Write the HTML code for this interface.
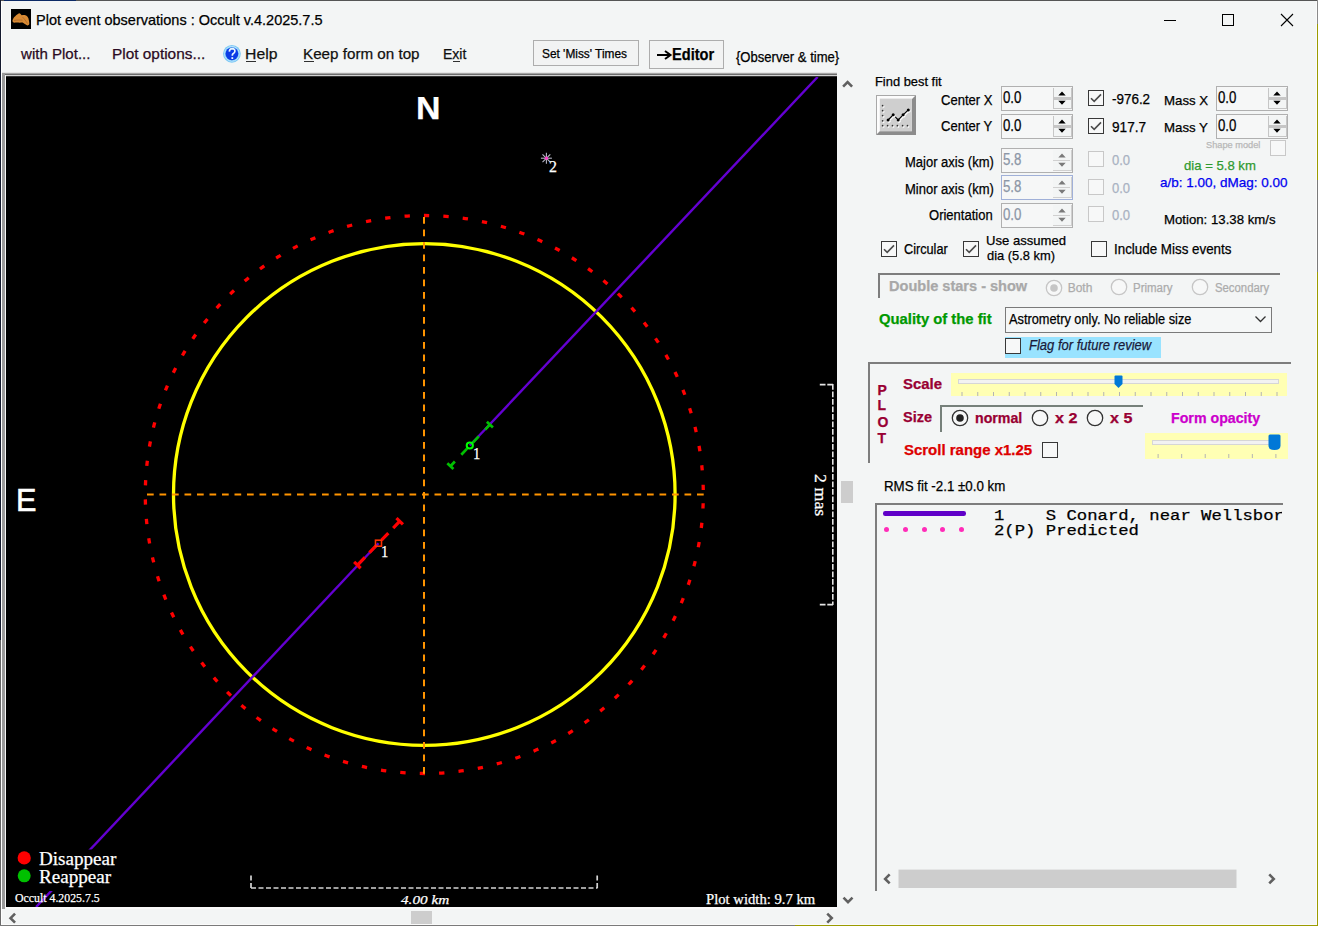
<!DOCTYPE html>
<html><head><meta charset="utf-8"><style>
html,body{margin:0;padding:0;}
body{width:1318px;height:926px;position:relative;overflow:hidden;background:#f3f5f5;font-family:"Liberation Sans", sans-serif;}
.t{position:absolute;white-space:nowrap;-webkit-text-stroke:0.25px currentColor;}
</style></head><body>
<div style="position:absolute;left:0px;top:0px;width:1318px;height:1px;background:#555555"></div>
<div style="position:absolute;left:4px;top:0px;width:72px;height:1px;background:#0c2a66"></div>
<div style="position:absolute;left:0px;top:0px;width:1px;height:926px;background:#141a2e"></div>
<div style="position:absolute;left:0px;top:640px;width:1px;height:286px;background:#6a6a6a"></div>
<div style="position:absolute;left:1px;top:1px;width:1px;height:924px;background:#ffffff"></div>
<div style="position:absolute;left:1317px;top:0px;width:1px;height:24px;background:#8a8a8a"></div>
<div style="position:absolute;left:1317px;top:24px;width:1px;height:156px;background:#9b9b00"></div>
<div style="position:absolute;left:1317px;top:180px;width:1px;height:92px;background:#7a7a7a"></div>
<div style="position:absolute;left:1317px;top:272px;width:1px;height:654px;background:#9b9b00"></div>
<div style="position:absolute;left:1316px;top:1px;width:1px;height:924px;background:#fbfbfb"></div>
<div style="position:absolute;left:0px;top:925px;width:795px;height:1px;background:#7a7a7a"></div>
<div style="position:absolute;left:795px;top:925px;width:523px;height:1px;background:#9b9b00"></div>
<div style="position:absolute;left:1px;top:924px;width:1316px;height:1px;background:#fbfbfb"></div>
<svg style="position:absolute;left:11px;top:9px" width="20" height="20" viewBox="0 0 20 20">
<rect width="20" height="20" fill="#000"/>
<path d="M1.5 11.6 C2 9.5 3 8 4 7.4 C5.5 6 7 4.8 8.2 4.3 C9.3 4.6 10 5.5 10.8 6.3 C12 6 13.3 5.8 14.4 6.3 C16 7 17 8 17.5 9.6 C17.8 11.5 18.5 13.5 18.3 15 C17.8 16.2 17 16.6 16.4 16.4 C14.5 15.6 13 14.5 11.6 13.6 C9.5 13.8 7.5 13.8 6.3 13.6 C4.5 13.6 3 13.8 2.6 13.6 C1.8 13.2 1.4 12.4 1.5 11.6 Z" fill="#d88a34"/>
<path d="M3 11.5 C6 10.8 9 11 11.5 11.2 M11.5 8 C13 9.5 14.5 11.5 16.5 14.5" stroke="#b06a2a" stroke-width="0.9" fill="none"/>
</svg>
<div class="t" style="left:35.53px;top:11.95px;font-family:'Liberation Sans', sans-serif;font-size:15px;line-height:15px;font-weight:normal;font-style:normal;color:#000;transform:scaleX(0.9661);transform-origin:0 0;">Plot event observations : Occult v.4.2025.7.5</div>
<div style="position:absolute;left:1164px;top:20px;width:12px;height:1px;background:#000"></div>
<div style="position:absolute;left:1222px;top:14px;width:12px;height:12px;border:1px solid #000;box-sizing:border-box"></div>
<svg style="position:absolute;left:1280px;top:13px" width="14" height="14" viewBox="0 0 14 14">
<path d="M1 1 L13 13 M13 1 L1 13" stroke="#000" stroke-width="1.1"/></svg>
<div class="t" style="left:21.00px;top:46.05px;font-family:'Liberation Sans', sans-serif;font-size:15px;line-height:15px;font-weight:normal;font-style:normal;color:#2a0a22;transform:scaleX(1.0040);transform-origin:0 0;">with Plot...</div>
<div class="t" style="left:112.47px;top:46.05px;font-family:'Liberation Sans', sans-serif;font-size:15px;line-height:15px;font-weight:normal;font-style:normal;color:#2a0a22;transform:scaleX(1.0257);transform-origin:0 0;">Plot options...</div>
<svg style="position:absolute;left:222px;top:44px" width="20" height="20" viewBox="0 0 20 20">
<circle cx="9.9" cy="9.8" r="8.9" fill="#7cc8f4"/>
<circle cx="9.9" cy="9.8" r="7.4" fill="none" stroke="#b8e4ff" stroke-width="1"/>
<circle cx="9.9" cy="9.8" r="6.4" fill="#0a3ce6"/>
<path d="M7.3 7.6 Q7.5 4.6 10.2 4.6 Q13 4.7 12.9 7.2 Q12.8 8.8 11 9.8 Q10.3 10.3 10.3 11.8" fill="none" stroke="#e8f6ff" stroke-width="1.7"/>
<rect x="9.4" y="13.2" width="1.8" height="1.8" fill="#e8f6ff"/></svg>
<div class="t" style="left:244.55px;top:46.05px;font-family:'Liberation Sans', sans-serif;font-size:15px;line-height:15px;font-weight:normal;font-style:normal;color:#101010;transform:scaleX(1.0506);transform-origin:0 0;">Help</div>
<div style="position:absolute;left:246px;top:61px;width:10px;height:1px;background:#303030"></div>
<div class="t" style="left:302.79px;top:46.05px;font-family:'Liberation Sans', sans-serif;font-size:15px;line-height:15px;font-weight:normal;font-style:normal;color:#101010;transform:scaleX(1.0129);transform-origin:0 0;">Keep form on top</div>
<div style="position:absolute;left:304px;top:61px;width:10px;height:1px;background:#303030"></div>
<div class="t" style="left:442.87px;top:46.05px;font-family:'Liberation Sans', sans-serif;font-size:15px;line-height:15px;font-weight:normal;font-style:normal;color:#101010;transform:scaleX(0.9341);transform-origin:0 0;">Exit</div>
<div style="position:absolute;left:453px;top:61px;width:7px;height:1px;background:#303030"></div>
<div style="position:absolute;left:533px;top:40px;width:106px;height:26px;border:1px solid #adadad;box-sizing:border-box;background:#f2f3f3"></div>
<div class="t" style="left:541.80px;top:47.90px;font-family:'Liberation Sans', sans-serif;font-size:12px;line-height:12px;font-weight:normal;font-style:normal;color:#000;transform:scaleX(0.9890);transform-origin:0 0;">Set &#x27;Miss&#x27; Times</div>
<div style="position:absolute;left:649px;top:40px;width:75px;height:29px;border:1px solid #adadad;box-sizing:border-box;background:#f2f3f3"></div>
<div class="t" style="left:671.79px;top:46.60px;font-family:'Liberation Sans', sans-serif;font-size:16px;line-height:16px;font-weight:bold;font-style:normal;color:#000;transform:scaleX(0.9135);transform-origin:0 0;">Editor</div>
<svg style="position:absolute;left:656px;top:49px" width="17" height="12"><path d="M1 6 H13" stroke="#000" stroke-width="2"/><path d="M9 2 L14.5 6 L9 10" fill="none" stroke="#000" stroke-width="2"/></svg>
<div class="t" style="left:735.50px;top:49.90px;font-family:'Liberation Sans', sans-serif;font-size:14px;line-height:14px;font-weight:normal;font-style:normal;color:#000;transform:scaleX(0.9340);transform-origin:0 0;">{Observer &amp; time}</div>
<div style="position:absolute;left:2px;top:72px;width:835px;height:1px;background:#e4e4e4"></div>
<div style="position:absolute;left:2px;top:73px;width:835px;height:1px;background:#a4a4a4"></div>
<div style="position:absolute;left:2px;top:74px;width:835px;height:1px;background:#6c6c6c"></div>
<div style="position:absolute;left:5px;top:75px;width:832px;height:1px;background:#d2d2d2"></div>
<div style="position:absolute;left:6px;top:76px;width:831px;height:1px;background:#303030"></div>
<div style="position:absolute;left:2px;top:73px;width:3px;height:836px;background:#9a9a9a"></div>
<div style="position:absolute;left:5px;top:75px;width:1px;height:834px;background:#f6f6f6"></div>
<div style="position:absolute;left:6px;top:77px;width:831px;height:830px;background:#000"></div>
<div style="position:absolute;left:6px;top:907px;width:831px;height:2px;background:#fafafa"></div>
<svg style="position:absolute;left:6px;top:77px" width="831" height="830" viewBox="6 77 831 830">
<defs><clipPath id="pc"><rect x="6" y="77" width="831" height="830"/></clipPath></defs><g clip-path="url(#pc)">
<circle cx="424.3" cy="494.5" r="250.8" fill="none" stroke="#ffff00" stroke-width="3.3"/>
<circle cx="424.3" cy="494.5" r="279.0" fill="none" stroke="#ff0000" stroke-width="3.3" stroke-dasharray="5.3 14.178" stroke-dashoffset="10.628"/>
<line x1="147" y1="494.5" x2="704" y2="494.5" stroke="#ff9400" stroke-width="2" stroke-dasharray="6.7 5.8"/>
<line x1="424" y1="217" x2="424" y2="774" stroke="#ff9400" stroke-width="2" stroke-dasharray="6.7 5.8"/>
<line x1="817.6" y1="77" x2="469.8" y2="445.5" stroke="#6400d2" stroke-width="2.4"/>
<line x1="378.5" y1="543.2" x2="36.1" y2="907" stroke="#6400d2" stroke-width="2.4"/>
<rect x="6" y="849.5" width="125" height="41.5" fill="#000"/>
<line x1="357.4" y1="565.1" x2="399.7" y2="521.3" stroke="#ff0000" stroke-width="3.2" stroke-dasharray="10.8 6.5 9.8 7.6 9.8 7 9.2"/><line x1="360.64" y1="568.23" x2="354.16" y2="561.97" stroke="#ff0000" stroke-width="3.2"/><line x1="402.94" y1="524.43" x2="396.46" y2="518.17" stroke="#ff0000" stroke-width="3.2"/>
<rect x="375.5" y="540.2" width="6" height="6" fill="none" stroke="#ff3000" stroke-width="1.6"/>
<line x1="450.4" y1="466.2" x2="489.9" y2="424.7" stroke="#00c000" stroke-width="2.7" stroke-dasharray="6.5 9.3 8.4 8.4 8.5 9.4 6.5"/><line x1="453.44" y1="469.10" x2="447.36" y2="463.30" stroke="#00c000" stroke-width="2.7"/><line x1="492.94" y1="427.60" x2="486.86" y2="421.80" stroke="#00c000" stroke-width="2.7"/>
<circle cx="469.8" cy="445.5" r="3.1" fill="none" stroke="#00ff00" stroke-width="2"/>
<line x1="551.90" y1="158.20" x2="540.90" y2="158.20" stroke="#b8b8c8" stroke-width="1.1"/><line x1="550.29" y1="162.09" x2="542.51" y2="154.31" stroke="#b8b8c8" stroke-width="1.1"/><line x1="546.40" y1="163.70" x2="546.40" y2="152.70" stroke="#b8b8c8" stroke-width="1.1"/><line x1="542.51" y1="162.09" x2="550.29" y2="154.31" stroke="#b8b8c8" stroke-width="1.1"/>
<circle cx="546.4" cy="158.2" r="1.6" fill="#ff3ac8"/>
<circle cx="24.2" cy="857.9" r="6.6" fill="#ff0000"/>
<circle cx="24.2" cy="875.8" r="6.5" fill="#00c000"/>
<path d="M251 875.5 V888.5 M251 888 H597.5 M597.2 875.5 V888.5" fill="none" stroke="#d4d4d4" stroke-width="1.7" stroke-dasharray="5 2.5"/>
<path d="M833 384.6 H819.3 M832.8 384 V605 M833 604.6 H819.3" fill="none" stroke="#e4e4e4" stroke-width="1.6" stroke-dasharray="5.7 1.8"/>
</g></svg>
<div class="t" style="left:416.38px;top:93.17px;font-family:'Liberation Sans', sans-serif;font-size:30.5px;line-height:30.5px;font-weight:bold;font-style:normal;color:#fff;transform:scaleX(1.1111);transform-origin:0 0;">N</div>
<div class="t" style="left:16.12px;top:485.35px;font-family:'Liberation Sans', sans-serif;font-size:31px;line-height:31px;font-weight:normal;font-style:normal;color:#fff;transform:scaleX(0.9889);transform-origin:0 0;-webkit-text-stroke:0.6px #fff;">E</div>
<div class="t" style="left:38.80px;top:849.15px;font-family:'Liberation Serif', serif;font-size:19px;line-height:19px;font-weight:normal;font-style:normal;color:#fff;transform:scaleX(1.0052);transform-origin:0 0;">Disappear</div>
<div class="t" style="left:38.80px;top:866.65px;font-family:'Liberation Serif', serif;font-size:19px;line-height:19px;font-weight:normal;font-style:normal;color:#fff;transform:scaleX(1.0055);transform-origin:0 0;">Reappear</div>
<div class="t" style="left:14.90px;top:890.82px;font-family:'Liberation Serif', serif;font-size:13.5px;line-height:13.5px;font-weight:normal;font-style:normal;color:#fff;transform:scaleX(0.8764);transform-origin:0 0;">Occult 4.2025.7.5</div>
<div class="t" style="left:401.00px;top:893.05px;font-family:'Liberation Serif', serif;font-size:13px;line-height:13px;font-weight:normal;font-style:italic;color:#fff;transform:scaleX(1.1700);transform-origin:0 0;">4.00 km</div>
<div class="t" style="left:706.20px;top:891.88px;font-family:'Liberation Serif', serif;font-size:14.5px;line-height:14.5px;font-weight:normal;font-style:normal;color:#fff;transform:scaleX(1.0122);transform-origin:0 0;">Plot width: 9.7 km</div>
<div class="t" style="left:380.61px;top:543.77px;font-family:'Liberation Serif', serif;font-size:16.5px;line-height:16.5px;font-weight:normal;font-style:normal;color:#fff;transform:scaleX(0.8857);transform-origin:0 0;">1</div>
<div class="t" style="left:472.51px;top:445.88px;font-family:'Liberation Serif', serif;font-size:16.5px;line-height:16.5px;font-weight:normal;font-style:normal;color:#fff;transform:scaleX(0.8857);transform-origin:0 0;">1</div>
<div class="t" style="left:548.50px;top:158.35px;font-family:'Liberation Serif', serif;font-size:17px;line-height:17px;font-weight:normal;font-style:normal;color:#fff;transform:scaleX(0.9375);transform-origin:0 0;">2</div>
<div style="position:absolute;left:827.5px;top:473.5px;transform:rotate(90deg) scaleX(1.12);transform-origin:0 0;font-family:'Liberation Serif';font-size:16px;line-height:15px;color:#fff;white-space:nowrap;-webkit-text-stroke:0.25px #fff">2 mas</div>
<svg style="position:absolute;left:0;top:0" width="1318" height="926"><path d="M843.1 86.55 L847.6 82.05 L852.1 86.55" fill="none" stroke="#606060" stroke-width="2.6"/><path d="M843.5 897.55 L848 902.05 L852.5 897.55" fill="none" stroke="#606060" stroke-width="2.6"/><path d="M15.05 913.7 L10.55 918.2 L15.05 922.7" fill="none" stroke="#606060" stroke-width="2.6"/><path d="M827.25 913.6 L831.75 918.1 L827.25 922.6" fill="none" stroke="#606060" stroke-width="2.6"/><rect x="841" y="481" width="12" height="22" fill="#cdcdcd"/><rect x="411" y="911" width="21" height="13" fill="#cdcdcd"/><path d="M889.65 874.4 L885.15 878.9 L889.65 883.4" fill="none" stroke="#606060" stroke-width="2.6"/><path d="M1269.25 874.4 L1273.75 878.9 L1269.25 883.4" fill="none" stroke="#606060" stroke-width="2.6"/><rect x="898.5" y="869.6" width="338" height="18.4" fill="#cdcdcd"/></svg>
<div class="t" style="left:875.01px;top:74.95px;font-family:'Liberation Sans', sans-serif;font-size:13px;line-height:13px;font-weight:normal;font-style:normal;color:#000;transform:scaleX(0.9912);transform-origin:0 0;">Find best fit</div>
<svg style="position:absolute;left:876px;top:95px" width="40" height="40" viewBox="0 0 40 40">
<rect width="40" height="40" fill="#8c8c8c"/>
<path d="M0 0 H40 L36 4 V36 H4 L0 40 Z" fill="#fcfcfc"/>
<rect x="0" y="0" width="40" height="1" fill="#a8a8a8"/><rect x="0" y="0" width="1" height="40" fill="#a8a8a8"/>
<rect x="3.8" y="3.6" width="32.1" height="32.8" fill="#cfcfcf"/>
<circle cx="7.5" cy="11.799999999999999" r="1" fill="#fff"/><circle cx="6.6" cy="10.7" r="0.85" fill="#333"/><circle cx="7.5" cy="16.8" r="1" fill="#fff"/><circle cx="6.6" cy="15.7" r="0.85" fill="#333"/><circle cx="7.5" cy="21.700000000000003" r="1" fill="#fff"/><circle cx="6.6" cy="20.6" r="0.85" fill="#333"/><circle cx="7.5" cy="26.900000000000002" r="1" fill="#fff"/><circle cx="6.6" cy="25.8" r="0.85" fill="#333"/><circle cx="7.5" cy="31.8" r="1" fill="#fff"/><circle cx="6.6" cy="30.7" r="0.85" fill="#333"/><circle cx="12.5" cy="31.8" r="1" fill="#fff"/><circle cx="11.6" cy="30.7" r="0.85" fill="#333"/><circle cx="17.4" cy="31.8" r="1" fill="#fff"/><circle cx="16.5" cy="30.7" r="0.85" fill="#333"/><circle cx="22.299999999999997" cy="31.8" r="1" fill="#fff"/><circle cx="21.4" cy="30.7" r="0.85" fill="#333"/><circle cx="27.5" cy="31.8" r="1" fill="#fff"/><circle cx="26.6" cy="30.7" r="0.85" fill="#333"/><circle cx="32.4" cy="31.8" r="1" fill="#fff"/><circle cx="31.5" cy="30.7" r="0.85" fill="#333"/>
<path d="M13.0 26.2 L18.099999999999998 21.0 L23.099999999999998 26.2 L28.0 21.0 L33.199999999999996 16.1" stroke="#fff" stroke-width="1.1" fill="none"/>
<path d="M12.1 25 L17.2 19.8 L22.2 25 L27.1 19.8 L32.3 14.9" stroke="#000" stroke-width="1.1" fill="none"/>
<circle cx="13.0" cy="26.2" r="1.5" fill="#fff"/><circle cx="18.099999999999998" cy="21.0" r="1.5" fill="#fff"/><circle cx="23.099999999999998" cy="26.2" r="1.5" fill="#fff"/><circle cx="28.0" cy="21.0" r="1.5" fill="#fff"/><circle cx="33.199999999999996" cy="16.1" r="1.5" fill="#fff"/><circle cx="12.1" cy="25" r="1.5" fill="#000"/><circle cx="17.2" cy="19.8" r="1.5" fill="#000"/><circle cx="22.2" cy="25" r="1.5" fill="#000"/><circle cx="27.1" cy="19.8" r="1.5" fill="#000"/><circle cx="32.3" cy="14.9" r="1.5" fill="#000"/>
</svg>
<div style="position:absolute;left:1001px;top:86px;width:72px;height:25px;border:1.5px solid #b0b0b0;box-sizing:border-box;background:#f6f7f7"></div>
<div style="position:absolute;left:1053px;top:88px;width:18.5px;height:21px;border:1.4px solid #c6c6c6;border-top:none;box-sizing:border-box;background:#f3f5f5"></div>
<div style="position:absolute;left:1054px;top:97.2px;width:16.5px;height:2.6px;background:#c6c6c6"></div>
<svg style="position:absolute;left:1053px;top:88px" width="19" height="21"><path d="M5.3 7.4 L9 3.4 L12.7 7.4 Z M5.3 12.8 L9 16.8 L12.7 12.8 Z" fill="#000"/></svg>
<div class="t" style="left:1002.90px;top:89.60px;font-family:'Liberation Sans', sans-serif;font-size:16px;line-height:16px;font-weight:normal;font-style:normal;color:#000;transform:scaleX(0.8280);transform-origin:0 0;">0.0</div>
<div style="position:absolute;left:1001px;top:114px;width:72px;height:25px;border:1.5px solid #b0b0b0;box-sizing:border-box;background:#f6f7f7"></div>
<div style="position:absolute;left:1053px;top:116px;width:18.5px;height:21px;border:1.4px solid #c6c6c6;border-top:none;box-sizing:border-box;background:#f3f5f5"></div>
<div style="position:absolute;left:1054px;top:125.2px;width:16.5px;height:2.6px;background:#c6c6c6"></div>
<svg style="position:absolute;left:1053px;top:116px" width="19" height="21"><path d="M5.3 7.4 L9 3.4 L12.7 7.4 Z M5.3 12.8 L9 16.8 L12.7 12.8 Z" fill="#000"/></svg>
<div class="t" style="left:1002.90px;top:117.60px;font-family:'Liberation Sans', sans-serif;font-size:16px;line-height:16px;font-weight:normal;font-style:normal;color:#000;transform:scaleX(0.8280);transform-origin:0 0;">0.0</div>
<div style="position:absolute;left:1001px;top:148px;width:72px;height:25px;border:1.5px solid #b0b0b0;box-sizing:border-box;background:#f6f7f7"></div>
<div style="position:absolute;left:1053px;top:150px;width:18.5px;height:21px;border-right:1.4px solid #d0d0d0;border-bottom:1.2px solid #d0d0d0;box-sizing:border-box;background:#f3f5f5"></div>
<div style="position:absolute;left:1053px;top:159.6px;width:17px;height:1.6px;background:#d0d0d0"></div>
<svg style="position:absolute;left:1053px;top:150px" width="19" height="21"><path d="M5.3 7.4 L9 3.4 L12.7 7.4 Z M5.3 12.8 L9 16.8 L12.7 12.8 Z" fill="#7a7a7a"/></svg>
<div class="t" style="left:1002.90px;top:151.60px;font-family:'Liberation Sans', sans-serif;font-size:16px;line-height:16px;font-weight:normal;font-style:normal;color:#8c96a6;transform:scaleX(0.8280);transform-origin:0 0;">5.8</div>
<div style="position:absolute;left:1001px;top:175px;width:72px;height:25px;border:1.5px solid #a0b0d8;box-sizing:border-box;background:#f6f7f7"></div>
<div style="position:absolute;left:1053px;top:177px;width:18.5px;height:21px;border-right:1.4px solid #d0d0d0;border-bottom:1.2px solid #d0d0d0;box-sizing:border-box;background:#f3f5f5"></div>
<div style="position:absolute;left:1053px;top:186.6px;width:17px;height:1.6px;background:#d0d0d0"></div>
<svg style="position:absolute;left:1053px;top:177px" width="19" height="21"><path d="M5.3 7.4 L9 3.4 L12.7 7.4 Z M5.3 12.8 L9 16.8 L12.7 12.8 Z" fill="#7a7a7a"/></svg>
<div class="t" style="left:1002.90px;top:178.60px;font-family:'Liberation Sans', sans-serif;font-size:16px;line-height:16px;font-weight:normal;font-style:normal;color:#8c96a6;transform:scaleX(0.8280);transform-origin:0 0;">5.8</div>
<div style="position:absolute;left:1001px;top:203px;width:72px;height:25px;border:1.5px solid #b0b0b0;box-sizing:border-box;background:#f6f7f7"></div>
<div style="position:absolute;left:1053px;top:205px;width:18.5px;height:21px;border-right:1.4px solid #d0d0d0;border-bottom:1.2px solid #d0d0d0;box-sizing:border-box;background:#f3f5f5"></div>
<div style="position:absolute;left:1053px;top:214.6px;width:17px;height:1.6px;background:#d0d0d0"></div>
<svg style="position:absolute;left:1053px;top:205px" width="19" height="21"><path d="M5.3 7.4 L9 3.4 L12.7 7.4 Z M5.3 12.8 L9 16.8 L12.7 12.8 Z" fill="#7a7a7a"/></svg>
<div class="t" style="left:1002.90px;top:206.60px;font-family:'Liberation Sans', sans-serif;font-size:16px;line-height:16px;font-weight:normal;font-style:normal;color:#8c96a6;transform:scaleX(0.8280);transform-origin:0 0;">0.0</div>
<div style="position:absolute;left:1216px;top:86px;width:72px;height:25px;border:1.5px solid #b0b0b0;box-sizing:border-box;background:#f6f7f7"></div>
<div style="position:absolute;left:1268px;top:88px;width:18.5px;height:21px;border:1.4px solid #c6c6c6;border-top:none;box-sizing:border-box;background:#f3f5f5"></div>
<div style="position:absolute;left:1269px;top:97.2px;width:16.5px;height:2.6px;background:#c6c6c6"></div>
<svg style="position:absolute;left:1268px;top:88px" width="19" height="21"><path d="M5.3 7.4 L9 3.4 L12.7 7.4 Z M5.3 12.8 L9 16.8 L12.7 12.8 Z" fill="#000"/></svg>
<div class="t" style="left:1217.90px;top:89.60px;font-family:'Liberation Sans', sans-serif;font-size:16px;line-height:16px;font-weight:normal;font-style:normal;color:#000;transform:scaleX(0.8280);transform-origin:0 0;">0.0</div>
<div style="position:absolute;left:1216px;top:114px;width:72px;height:25px;border:1.5px solid #b0b0b0;box-sizing:border-box;background:#f6f7f7"></div>
<div style="position:absolute;left:1268px;top:116px;width:18.5px;height:21px;border:1.4px solid #c6c6c6;border-top:none;box-sizing:border-box;background:#f3f5f5"></div>
<div style="position:absolute;left:1269px;top:125.2px;width:16.5px;height:2.6px;background:#c6c6c6"></div>
<svg style="position:absolute;left:1268px;top:116px" width="19" height="21"><path d="M5.3 7.4 L9 3.4 L12.7 7.4 Z M5.3 12.8 L9 16.8 L12.7 12.8 Z" fill="#000"/></svg>
<div class="t" style="left:1217.90px;top:117.60px;font-family:'Liberation Sans', sans-serif;font-size:16px;line-height:16px;font-weight:normal;font-style:normal;color:#000;transform:scaleX(0.8280);transform-origin:0 0;">0.0</div>
<div class="t" style="left:941.20px;top:93.30px;font-family:'Liberation Sans', sans-serif;font-size:14px;line-height:14px;font-weight:normal;font-style:normal;color:#000;transform:scaleX(0.9319);transform-origin:0 0;">Center X</div>
<div class="t" style="left:941.20px;top:119.40px;font-family:'Liberation Sans', sans-serif;font-size:14px;line-height:14px;font-weight:normal;font-style:normal;color:#000;transform:scaleX(0.9319);transform-origin:0 0;">Center Y</div>
<div class="t" style="left:904.97px;top:154.70px;font-family:'Liberation Sans', sans-serif;font-size:14px;line-height:14px;font-weight:normal;font-style:normal;color:#000;transform:scaleX(0.9287);transform-origin:0 0;">Major axis (km)</div>
<div class="t" style="left:904.97px;top:182.00px;font-family:'Liberation Sans', sans-serif;font-size:14px;line-height:14px;font-weight:normal;font-style:normal;color:#000;transform:scaleX(0.9287);transform-origin:0 0;">Minor axis (km)</div>
<div class="t" style="left:929.00px;top:207.80px;font-family:'Liberation Sans', sans-serif;font-size:14px;line-height:14px;font-weight:normal;font-style:normal;color:#000;transform:scaleX(0.9306);transform-origin:0 0;">Orientation</div>
<div style="position:absolute;left:1088px;top:90px;width:16px;height:16px;border:1.7px solid #383838;box-sizing:border-box;background:#f7f8f8"></div>
<svg style="position:absolute;left:1088px;top:90px" width="16" height="16"><path d="M3 8.2 L6.2 11.4 L13 4.4" fill="none" stroke="#4a4a4a" stroke-width="1.6"/></svg>
<div style="position:absolute;left:1088px;top:118px;width:16px;height:16px;border:1.7px solid #383838;box-sizing:border-box;background:#f7f8f8"></div>
<svg style="position:absolute;left:1088px;top:118px" width="16" height="16"><path d="M3 8.2 L6.2 11.4 L13 4.4" fill="none" stroke="#4a4a4a" stroke-width="1.6"/></svg>
<div style="position:absolute;left:1088px;top:151px;width:16px;height:16px;border:1.7px solid #c8c8c8;box-sizing:border-box;background:#f7f8f8"></div>
<div style="position:absolute;left:1088px;top:179px;width:16px;height:16px;border:1.7px solid #c8c8c8;box-sizing:border-box;background:#f7f8f8"></div>
<div style="position:absolute;left:1088px;top:206px;width:16px;height:16px;border:1.7px solid #c8c8c8;box-sizing:border-box;background:#f7f8f8"></div>
<div class="t" style="left:1111.70px;top:92.10px;font-family:'Liberation Sans', sans-serif;font-size:14px;line-height:14px;font-weight:normal;font-style:normal;color:#000;transform:scaleX(0.9597);transform-origin:0 0;">-976.2</div>
<div class="t" style="left:1111.70px;top:119.70px;font-family:'Liberation Sans', sans-serif;font-size:14px;line-height:14px;font-weight:normal;font-style:normal;color:#000;transform:scaleX(0.9731);transform-origin:0 0;">917.7</div>
<div class="t" style="left:1111.70px;top:153.30px;font-family:'Liberation Sans', sans-serif;font-size:14px;line-height:14px;font-weight:normal;font-style:normal;color:#a9b2c2;transform:scaleX(0.9301);transform-origin:0 0;">0.0</div>
<div class="t" style="left:1111.70px;top:180.90px;font-family:'Liberation Sans', sans-serif;font-size:14px;line-height:14px;font-weight:normal;font-style:normal;color:#a9b2c2;transform:scaleX(0.9301);transform-origin:0 0;">0.0</div>
<div class="t" style="left:1111.70px;top:207.60px;font-family:'Liberation Sans', sans-serif;font-size:14px;line-height:14px;font-weight:normal;font-style:normal;color:#a9b2c2;transform:scaleX(0.9301);transform-origin:0 0;">0.0</div>
<div class="t" style="left:1163.98px;top:93.85px;font-family:'Liberation Sans', sans-serif;font-size:13px;line-height:13px;font-weight:normal;font-style:normal;color:#000;transform:scaleX(1.0194);transform-origin:0 0;">Mass X</div>
<div class="t" style="left:1163.98px;top:121.35px;font-family:'Liberation Sans', sans-serif;font-size:13px;line-height:13px;font-weight:normal;font-style:normal;color:#000;transform:scaleX(1.0194);transform-origin:0 0;">Mass Y</div>
<div class="t" style="left:1206.00px;top:140.65px;font-family:'Liberation Sans', sans-serif;font-size:9px;line-height:9px;font-weight:normal;font-style:normal;color:#b8b8b8;transform:scaleX(1.0238);transform-origin:0 0;">Shape model</div>
<div style="position:absolute;left:1269.5px;top:139.5px;width:16px;height:16px;border:1.7px solid #c8c8c8;box-sizing:border-box;background:#f7f8f8"></div>
<div class="t" style="left:1183.50px;top:159.15px;font-family:'Liberation Sans', sans-serif;font-size:13px;line-height:13px;font-weight:normal;font-style:normal;color:#2f9a2f;transform:scaleX(1.0093);transform-origin:0 0;">dia = 5.8 km</div>
<div class="t" style="left:1159.80px;top:176.35px;font-family:'Liberation Sans', sans-serif;font-size:13px;line-height:13px;font-weight:normal;font-style:normal;color:#0000f0;transform:scaleX(1.0372);transform-origin:0 0;">a/b: 1.00, dMag: 0.00</div>
<div class="t" style="left:1163.98px;top:213.45px;font-family:'Liberation Sans', sans-serif;font-size:13px;line-height:13px;font-weight:normal;font-style:normal;color:#000;transform:scaleX(1.0153);transform-origin:0 0;">Motion: 13.38 km/s</div>
<div style="position:absolute;left:881px;top:241px;width:16px;height:16px;border:1.7px solid #383838;box-sizing:border-box;background:#f7f8f8"></div>
<svg style="position:absolute;left:881px;top:241px" width="16" height="16"><path d="M3 8.2 L6.2 11.4 L13 4.4" fill="none" stroke="#4a4a4a" stroke-width="1.6"/></svg>
<div class="t" style="left:904.00px;top:241.70px;font-family:'Liberation Sans', sans-serif;font-size:14px;line-height:14px;font-weight:normal;font-style:normal;color:#000;transform:scaleX(0.9060);transform-origin:0 0;">Circular</div>
<div style="position:absolute;left:963px;top:241px;width:16px;height:16px;border:1.7px solid #383838;box-sizing:border-box;background:#f7f8f8"></div>
<svg style="position:absolute;left:963px;top:241px" width="16" height="16"><path d="M3 8.2 L6.2 11.4 L13 4.4" fill="none" stroke="#4a4a4a" stroke-width="1.6"/></svg>
<div class="t" style="left:985.79px;top:233.95px;font-family:'Liberation Sans', sans-serif;font-size:13px;line-height:13px;font-weight:normal;font-style:normal;color:#000;transform:scaleX(1.0058);transform-origin:0 0;">Use assumed</div>
<div class="t" style="left:986.80px;top:249.25px;font-family:'Liberation Sans', sans-serif;font-size:13px;line-height:13px;font-weight:normal;font-style:normal;color:#000;transform:scaleX(0.9912);transform-origin:0 0;">dia (5.8 km)</div>
<div style="position:absolute;left:1091px;top:241px;width:16px;height:16px;border:1.7px solid #383838;box-sizing:border-box;background:#f7f8f8"></div>
<div class="t" style="left:1113.54px;top:241.70px;font-family:'Liberation Sans', sans-serif;font-size:14px;line-height:14px;font-weight:normal;font-style:normal;color:#000;transform:scaleX(0.9554);transform-origin:0 0;">Include Miss events</div>
<div style="position:absolute;left:878px;top:273px;width:402px;height:2px;background:#7d7d7d"></div>
<div style="position:absolute;left:878px;top:273px;width:2px;height:25px;background:#7d7d7d"></div>
<div class="t" style="left:888.70px;top:279.10px;font-family:'Liberation Sans', sans-serif;font-size:14px;line-height:14px;font-weight:bold;font-style:normal;color:#a8a8a8;transform:scaleX(1.0388);transform-origin:0 0;">Double stars - show</div>
<svg style="position:absolute;left:1045px;top:278.7px" width="18" height="18"><circle cx="9" cy="9" r="7.7" fill="#f7f8f8" stroke="#c6c6c6" stroke-width="1.3"/><circle cx="9" cy="9" r="3.8" fill="#c6c6c6"/></svg>
<div class="t" style="left:1067.70px;top:281.80px;font-family:'Liberation Sans', sans-serif;font-size:12px;line-height:12px;font-weight:normal;font-style:normal;color:#acacac;">Both</div>
<svg style="position:absolute;left:1109.8px;top:277.8px" width="18" height="18"><circle cx="9" cy="9" r="7.7" fill="#f7f8f8" stroke="#c6c6c6" stroke-width="1.3"/></svg>
<div class="t" style="left:1133.00px;top:282.10px;font-family:'Liberation Sans', sans-serif;font-size:12px;line-height:12px;font-weight:normal;font-style:normal;color:#acacac;transform:scaleX(0.9557);transform-origin:0 0;">Primary</div>
<svg style="position:absolute;left:1191px;top:277.8px" width="18" height="18"><circle cx="9" cy="9" r="7.7" fill="#f7f8f8" stroke="#c6c6c6" stroke-width="1.3"/></svg>
<div class="t" style="left:1214.50px;top:282.10px;font-family:'Liberation Sans', sans-serif;font-size:12px;line-height:12px;font-weight:normal;font-style:normal;color:#acacac;transform:scaleX(0.9448);transform-origin:0 0;">Secondary</div>
<div class="t" style="left:879.00px;top:312.20px;font-family:'Liberation Sans', sans-serif;font-size:14px;line-height:14px;font-weight:bold;font-style:normal;color:#009900;transform:scaleX(1.0572);transform-origin:0 0;">Quality of the fit</div>
<div style="position:absolute;left:1005px;top:307px;width:267px;height:26px;border:1px solid #7a7a7a;box-sizing:border-box;background:#f5f7f7"></div>
<div class="t" style="left:1009.40px;top:312.20px;font-family:'Liberation Sans', sans-serif;font-size:14px;line-height:14px;font-weight:normal;font-style:normal;color:#000;transform:scaleX(0.9134);transform-origin:0 0;">Astrometry only. No reliable size</div>
<svg style="position:absolute;left:1254px;top:315px" width="14" height="9"><path d="M1.5 1.5 L6.5 6.5 L11.5 1.5" fill="none" stroke="#333" stroke-width="1.3"/></svg>
<div style="position:absolute;left:1005px;top:336.5px;width:156px;height:21px;background:#99e3ff"></div>
<div style="position:absolute;left:1005px;top:338px;width:16px;height:16px;border:1.7px solid #383838;box-sizing:border-box;background:#f7f8f8"></div>
<div class="t" style="left:1029.40px;top:337.90px;font-family:'Liberation Sans', sans-serif;font-size:14px;line-height:14px;font-weight:normal;font-style:italic;color:#1a1a3a;transform:scaleX(0.9291);transform-origin:0 0;">Flag for future review</div>
<div style="position:absolute;left:868px;top:362px;width:423px;height:2px;background:#7d7d7d"></div>
<div style="position:absolute;left:868px;top:362px;width:2px;height:101px;background:#7d7d7d"></div>
<div class="t" style="left:877.50px;top:382.70px;font-family:'Liberation Sans', sans-serif;font-size:14px;line-height:14px;font-weight:bold;font-style:normal;color:#990033;">P</div>
<div class="t" style="left:877.50px;top:398.10px;font-family:'Liberation Sans', sans-serif;font-size:14px;line-height:14px;font-weight:bold;font-style:normal;color:#990033;">L</div>
<div class="t" style="left:877.50px;top:414.60px;font-family:'Liberation Sans', sans-serif;font-size:14px;line-height:14px;font-weight:bold;font-style:normal;color:#990033;">O</div>
<div class="t" style="left:877.50px;top:431.00px;font-family:'Liberation Sans', sans-serif;font-size:14px;line-height:14px;font-weight:bold;font-style:normal;color:#990033;">T</div>
<div class="t" style="left:902.80px;top:377.20px;font-family:'Liberation Sans', sans-serif;font-size:14px;line-height:14px;font-weight:bold;font-style:normal;color:#990033;transform:scaleX(1.0652);transform-origin:0 0;">Scale</div>
<div style="position:absolute;left:951px;top:373px;width:336px;height:23px;background:#ffffb4"></div>
<div style="position:absolute;left:957.5px;top:379px;width:321px;height:5px;border:1px solid #d6d6d6;box-sizing:border-box;background:#f2f2f2"></div>
<svg style="position:absolute;left:951px;top:373px" width="336" height="23"><rect x="10.50" y="19" width="1" height="4" fill="#b4b4b4"/><rect x="26.25" y="19" width="1" height="4" fill="#b4b4b4"/><rect x="42.00" y="19" width="1" height="4" fill="#b4b4b4"/><rect x="57.75" y="19" width="1" height="4" fill="#b4b4b4"/><rect x="73.50" y="19" width="1" height="4" fill="#b4b4b4"/><rect x="89.25" y="19" width="1" height="4" fill="#b4b4b4"/><rect x="105.00" y="19" width="1" height="4" fill="#b4b4b4"/><rect x="120.75" y="19" width="1" height="4" fill="#b4b4b4"/><rect x="136.50" y="19" width="1" height="4" fill="#b4b4b4"/><rect x="152.25" y="19" width="1" height="4" fill="#b4b4b4"/><rect x="168.00" y="19" width="1" height="4" fill="#b4b4b4"/><rect x="183.75" y="19" width="1" height="4" fill="#b4b4b4"/><rect x="199.50" y="19" width="1" height="4" fill="#b4b4b4"/><rect x="215.25" y="19" width="1" height="4" fill="#b4b4b4"/><rect x="231.00" y="19" width="1" height="4" fill="#b4b4b4"/><rect x="246.75" y="19" width="1" height="4" fill="#b4b4b4"/><rect x="262.50" y="19" width="1" height="4" fill="#b4b4b4"/><rect x="278.25" y="19" width="1" height="4" fill="#b4b4b4"/><rect x="294.00" y="19" width="1" height="4" fill="#b4b4b4"/><rect x="309.75" y="19" width="1" height="4" fill="#b4b4b4"/><rect x="325.50" y="19" width="1" height="4" fill="#b4b4b4"/></svg>
<svg style="position:absolute;left:1114px;top:375px" width="9" height="14"><path d="M0.5 1.5 Q0.5 0.5 1.5 0.5 H7.5 Q8.5 0.5 8.5 1.5 V9 L4.5 13 L0.5 9 Z" fill="#0078d7"/></svg>
<div class="t" style="left:902.80px;top:410.00px;font-family:'Liberation Sans', sans-serif;font-size:14px;line-height:14px;font-weight:bold;font-style:normal;color:#990033;transform:scaleX(1.0345);transform-origin:0 0;">Size</div>
<div style="position:absolute;left:940px;top:405px;width:203px;height:2px;background:#76807a"></div>
<div style="position:absolute;left:940px;top:405px;width:2px;height:27px;background:#76807a"></div>
<svg style="position:absolute;left:951.2px;top:409.3px" width="18" height="18"><circle cx="9" cy="9" r="7.7" fill="#f7f8f8" stroke="#333" stroke-width="1.3"/><circle cx="9" cy="9" r="3.8" fill="#222"/></svg>
<div class="t" style="left:974.80px;top:410.90px;font-family:'Liberation Sans', sans-serif;font-size:14px;line-height:14px;font-weight:bold;font-style:normal;color:#990033;transform:scaleX(1.0134);transform-origin:0 0;">normal</div>
<svg style="position:absolute;left:1031.3px;top:409.3px" width="18" height="18"><circle cx="9" cy="9" r="7.7" fill="#f7f8f8" stroke="#333" stroke-width="1.3"/></svg>
<div class="t" style="left:1055.00px;top:410.90px;font-family:'Liberation Sans', sans-serif;font-size:14px;line-height:14px;font-weight:bold;font-style:normal;color:#990033;transform:scaleX(1.1537);transform-origin:0 0;">x 2</div>
<svg style="position:absolute;left:1086px;top:409.3px" width="18" height="18"><circle cx="9" cy="9" r="7.7" fill="#f7f8f8" stroke="#333" stroke-width="1.3"/></svg>
<div class="t" style="left:1109.80px;top:410.90px;font-family:'Liberation Sans', sans-serif;font-size:14px;line-height:14px;font-weight:bold;font-style:normal;color:#990033;transform:scaleX(1.1486);transform-origin:0 0;">x 5</div>
<div class="t" style="left:1171.20px;top:411.30px;font-family:'Liberation Sans', sans-serif;font-size:14px;line-height:14px;font-weight:bold;font-style:normal;color:#cc00cc;transform:scaleX(1.0146);transform-origin:0 0;">Form opacity</div>
<div style="position:absolute;left:1145px;top:433px;width:143px;height:26px;background:#ffffb4"></div>
<div style="position:absolute;left:1152px;top:440px;width:128px;height:5px;border:1px solid #d6d6d6;box-sizing:border-box;background:#f2f2f2"></div>
<svg style="position:absolute;left:1145px;top:433px" width="143" height="26"><rect x="12.60" y="21" width="1" height="4" fill="#b4b4b4"/><rect x="36.16" y="21" width="1" height="4" fill="#b4b4b4"/><rect x="59.72" y="21" width="1" height="4" fill="#b4b4b4"/><rect x="83.28" y="21" width="1" height="4" fill="#b4b4b4"/><rect x="106.84" y="21" width="1" height="4" fill="#b4b4b4"/><rect x="130.40" y="21" width="1" height="4" fill="#b4b4b4"/></svg>
<svg style="position:absolute;left:1268px;top:434px" width="13" height="17"><path d="M0.5 2 Q0.5 0.5 2 0.5 H11 Q12.5 0.5 12.5 2 V11.5 Q12.5 16 6.5 16 Q0.5 16 0.5 11.5 Z" fill="#0078d7"/></svg>
<div class="t" style="left:903.70px;top:442.80px;font-family:'Liberation Sans', sans-serif;font-size:14px;line-height:14px;font-weight:bold;font-style:normal;color:#dd0000;transform:scaleX(1.0687);transform-origin:0 0;">Scroll range x1.25</div>
<div style="position:absolute;left:1042px;top:442px;width:16px;height:16px;border:1.7px solid #383838;box-sizing:border-box;background:#f7f8f8"></div>
<div class="t" style="left:884.15px;top:478.90px;font-family:'Liberation Sans', sans-serif;font-size:14px;line-height:14px;font-weight:normal;font-style:normal;color:#000;transform:scaleX(0.9513);transform-origin:0 0;">RMS fit -2.1 ±0.0 km</div>
<div style="position:absolute;left:875px;top:502.5px;width:408px;height:2px;background:#7d7d7d"></div>
<div style="position:absolute;left:875px;top:502.5px;width:2px;height:388px;background:#7d7d7d"></div>
<div style="position:absolute;left:883px;top:511.3px;width:83px;height:4.4px;background:#6000c8;border-radius:2.2px"></div>
<div style="position:absolute;left:884.2px;top:527px;width:5px;height:5px;background:#ff2cb8;border-radius:2.5px"></div>
<div style="position:absolute;left:902.8px;top:527px;width:5px;height:5px;background:#ff2cb8;border-radius:2.5px"></div>
<div style="position:absolute;left:921.6px;top:527px;width:5px;height:5px;background:#ff2cb8;border-radius:2.5px"></div>
<div style="position:absolute;left:940.4px;top:527px;width:5px;height:5px;background:#ff2cb8;border-radius:2.5px"></div>
<div style="position:absolute;left:959.1px;top:527px;width:5px;height:5px;background:#ff2cb8;border-radius:2.5px"></div>
<div style="position:absolute;left:877px;top:504px;width:405px;height:60px;overflow:hidden">
<div class="t" style="left:117.00px;top:4.66px;font-family:'Liberation Mono', monospace;font-size:15.3px;line-height:15.3px;font-weight:normal;font-style:normal;color:#000;transform:scaleX(1.128);transform-origin:0 0;">1&nbsp;&nbsp;&nbsp;&nbsp;S&nbsp;Conard,&nbsp;near&nbsp;Wellsboro</div>
<div class="t" style="left:117.00px;top:19.86px;font-family:'Liberation Mono', monospace;font-size:15.3px;line-height:15.3px;font-weight:normal;font-style:normal;color:#000;transform:scaleX(1.128);transform-origin:0 0;">2(P)&nbsp;Predicted</div>
</div>
</body></html>
